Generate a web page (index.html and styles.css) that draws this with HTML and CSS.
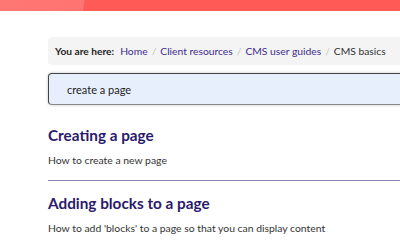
FILE: index.html
```html
<!DOCTYPE html>
<html>
<head>
<meta charset="utf-8">
<link rel="stylesheet" href="styles.css">
</head>
<body>
<header class="topbar"><div class="shine"></div></header>
<main class="content">
  <nav class="crumbs">
    <span class="here">You are here:</span>
    <a class="crumb">Home</a><span class="sep">/</span>
    <a class="crumb">Client resources</a><span class="sep">/</span>
    <a class="crumb">CMS user guides</a><span class="sep">/</span>
    <span class="current">CMS basics</span>
  </nav>
  <div class="search">create a page</div>
  <section class="result">
    <h2 class="title">Creating a page</h2>
    <p class="desc">How to create a new page</p>
  </section>
  <section class="result">
    <h2 class="title">Adding blocks to a page</h2>
    <p class="desc">How to add 'blocks' to a page so that you can display content</p>
  </section>
</main>
</body>
</html>
```
FILE: styles.css
```css
html, body {
  margin: 0;
  padding: 0;
  background: #fff;
  overflow: hidden;
  font-family: Lato, "Noto Sans", sans-serif;
}
.topbar {
  height: 11px;
  background: #ff5a55;
  position: relative;
  overflow: hidden;
}
.shine {
  position: absolute;
  left: 0;
  top: 0;
  width: 115px;
  height: 11px;
  background: linear-gradient(100deg, #ff7772 0%, #ff7470 72%, rgba(255,90,85,0) 73%);
}
.content {
  margin-left: 48px;
  width: 420px;
  padding-top: 26px;
}
.crumbs {
  background: #f4f4f4;
  border-radius: 4px;
  height: 28px;
  display: flex;
  align-items: center;
  padding-left: 7px;
  font-size: 10.3px;
  color: #333;
}
.here {
  font-weight: bold;
  color: #222;
  margin-right: 6px;
  font-size: 10.2px;
}
.crumb {
  color: #3d2c8d;
}
.sep {
  color: #c8c8c8;
  margin: 0 4px;
}
.current {
  color: #333;
}
.search {
  margin-top: 8px;
  margin-bottom: 20px;
  height: 32px;
  box-sizing: border-box;
  background: #e8effc;
  border: 1px solid #444;
  border-bottom-color: #888;
  border-radius: 4px;
  box-shadow: 0 0 3px rgba(0,0,0,0.25);
  display: flex;
  align-items: center;
  padding-left: 18px;
  font-size: 11px;
  color: #222;
}
.result {
  border-bottom: 1px solid #8a80b4;
}
.result + .result {
  padding-top: 12px;
}
.result:last-child {
  border-bottom: none;
}
.title {
  margin: 0;
  font-size: 15.3px;
  font-weight: bold;
  color: #2b1a6b;
  line-height: 20px;
}
.desc {
  margin: 8px 0 0;
  padding-bottom: 13px;
  font-size: 10.4px;
  color: #333;
  line-height: 14px;
}
```
